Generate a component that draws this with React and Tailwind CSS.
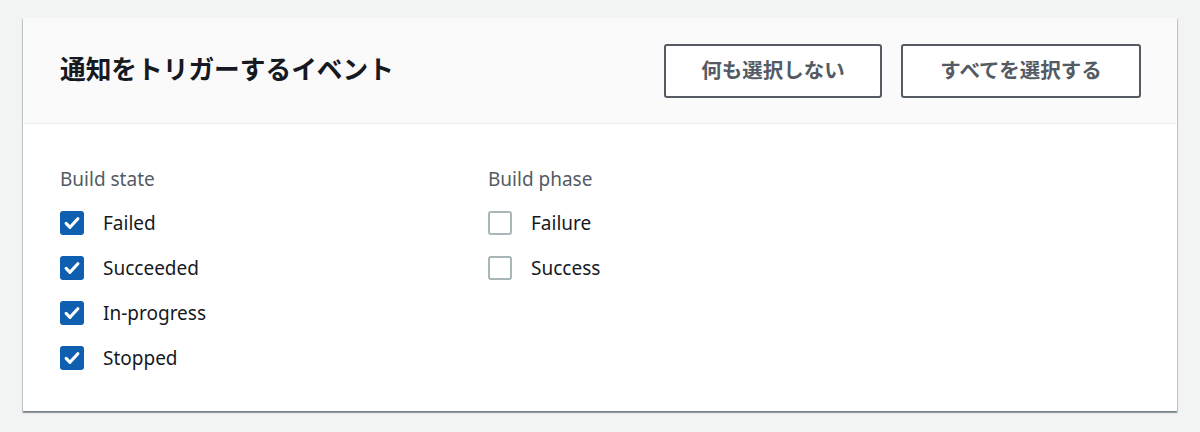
import React from 'react';

const font = { fontFamily: '"Noto Sans", "Noto Sans CJK JP", sans-serif' };

function Checkbox({ checked }) {
    if (checked) {
        return (
            <span className="flex h-[24px] w-[24px] items-center justify-center rounded-[3px] bg-[#0f5fb0]">
                <svg width="18" height="18" viewBox="0 0 16 16" fill="none">
                    <path d="M2.8 8.4l3.4 3.4 7-7.6" stroke="#fff" strokeWidth="2.8" strokeLinecap="round" strokeLinejoin="round" />
                </svg>
            </span>
        );
    }
    return <span className="block h-[24px] w-[24px] rounded-[3px] border-2 border-[#aab7b8] bg-white"></span>;
}

function Group({ title, items }) {
    return (
        <div className="w-[428px]">
            <div className="mb-[20px] text-[19px] leading-[24px] text-[#545b64]">{title}</div>
            <div className="flex flex-col gap-[21px]">
                {items.map(([label, checked]) => (
                    <label key={label} className="flex items-center gap-[19px]">
                        <Checkbox checked={checked} />
                        <span className="text-[19px] leading-[24px] text-[#16191f]">{label}</span>
                    </label>
                ))}
            </div>
        </div>
    );
}

export default function App() {
    return (
        <div className="h-[432px] w-[1200px] bg-[#f2f3f3] px-[23px] pt-[18px]" style={font}>
            <div className="bg-white shadow-[0_2px_1px_0_rgba(0,28,36,0.35),1px_1px_1px_0_rgba(0,28,36,0.15),-1px_1px_1px_0_rgba(0,28,36,0.15)]">
                <div className="flex h-[106px] items-center justify-between border-b border-[#eaeded] bg-[#fafafa] pl-[37px] pr-[36px]">
                    <h2 className="text-[25.7px] font-bold text-[#16191f]">通知をトリガーするイベント</h2>
                    <div className="flex gap-[19px]">
                        <button className="h-[54px] w-[218px] rounded-[3px] border-2 border-[#545b64] bg-white text-[20.5px] font-bold text-[#545b64]">何も選択しない</button>
                        <button className="h-[54px] w-[240px] rounded-[3px] border-2 border-[#545b64] bg-white text-[20.5px] font-bold text-[#545b64]">すべてを選択する</button>
                    </div>
                </div>
                <div className="flex h-[287px] px-[37px] pt-[43px]">
                    <Group title="Build state" items={[['Failed', true], ['Succeeded', true], ['In-progress', true], ['Stopped', true]]} />
                    <Group title="Build phase" items={[['Failure', false], ['Success', false]]} />
                </div>
            </div>
        </div>
    );
}
